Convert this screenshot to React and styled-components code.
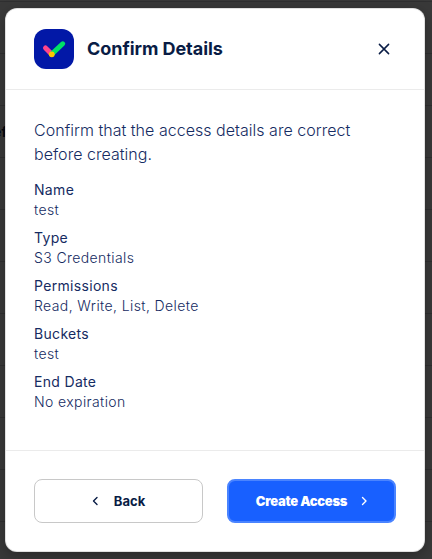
import React from "react";
import styled, { createGlobalStyle } from "styled-components";

const GlobalStyle = createGlobalStyle`
  * { box-sizing: border-box; }
  body {
    margin: 0;
    overflow: hidden;
    font-family: Inter, "Liberation Sans", sans-serif;
    color: #091c45;
  }
`;

const Backdrop = styled.div`
  position: relative;
  display: flex;
  width: 432px;
  height: 559px;
  padding: 8px 7px 7px 5px;
  background: repeating-linear-gradient(#2f2f30 0 1px, #393939 1px 52px) 0 1px;
`;

const CoveredText = styled.span`
  position: absolute;
  top: 123px;
  right: 425px;
  font-size: 14px;
  line-height: 18px;
  font-weight: 700;
  color: #02060f;
`;

const Dialog = styled.section`
  position: relative;
  display: flex;
  flex-direction: column;
  width: 420px;
  height: 544px;
  border: 1px solid rgba(0, 0, 0, 0.12);
  border-radius: 12px;
  background: #fff;
  box-shadow: 0 4px 14px rgba(0, 0, 0, 0.28);
`;

const Header = styled.header`
  display: flex;
  align-items: center;
  height: 81px;
  padding: 0 28px;
  border-bottom: 1px solid #ebebeb;
`;

const Title = styled.h1`
  flex: 1;
  margin: 0 0 0 13px;
  font-size: 18px;
  line-height: 24px;
  font-weight: 700;
  letter-spacing: -0.05px;
`;

const CloseButton = styled.button`
  display: flex;
  align-items: center;
  justify-content: center;
  width: 24px;
  height: 24px;
  padding: 0;
  border: 0;
  background: none;
  color: inherit;
`;

const Body = styled.div`
  flex: 1;
  padding: 28px;
  color: #152b62;
`;

const Intro = styled.p`
  margin: 0 0 14px;
  font-size: 16px;
  line-height: 24px;
  font-weight: 300;
  letter-spacing: 0.03px;
`;

const Details = styled.dl`
  display: flex;
  flex-direction: column;
  gap: 8px;
  margin: 0;
  font-size: 14px;
  line-height: 20px;
`;

const Label = styled.dt`
  font-weight: 400;
  letter-spacing: 0.32px;
`;

const Value = styled.dd`
  margin: 0;
  font-weight: 300;
  letter-spacing: 0.4px;
`;

const Footer = styled.footer`
  display: grid;
  grid-template-columns: 1fr 1fr;
  gap: 24px;
  height: 101px;
  padding: 28px 28px 0;
  border-top: 1px solid #ebebeb;
`;

const Button = styled.button`
  display: flex;
  align-items: center;
  justify-content: center;
  gap: ${(p) => (p.$primary ? "9px" : "11px")};
  height: 44px;
  padding: ${(p) => (p.$primary ? "0 0 0 5px" : "0 5px 0 0")};
  border-radius: 8px;
  border: ${(p) => (p.$primary ? "2px solid #4a84ff" : "1px solid #c8c8c8")};
  background: ${(p) => (p.$primary ? "#1860ff" : "#fff")};
  color: ${(p) => (p.$primary ? "#fff" : "#091c45")};
  font-family: inherit;
  font-size: 13px;
  line-height: 20px;
  font-weight: ${(p) => (p.$primary ? 900 : 700)};
  letter-spacing: ${(p) => (p.$primary ? "-0.27px" : "0")};
  white-space: nowrap;
`;

const details = [
  ["Name", "test"],
  ["Type", "S3 Credentials"],
  ["Permissions", "Read, Write, List, Delete"],
  ["Buckets", "test"],
  ["End Date", "No expiration"],
];

const CheckLogo = () => (
  <svg width="40" height="40" viewBox="0 0 40 40" fill="none">
    <rect width="40" height="40" rx="12" fill="#0218a7" />
    <g strokeWidth="5" strokeLinecap="round">
      <path d="M11.5 19L17.7 25.1" stroke="#ff458b" />
      <path d="M17.7 25.1L28.7 14.8" stroke="#00e366" />
    </g>
    <circle cx="17.8" cy="25.3" r="2.9" fill="#ffc600" />
  </svg>
);

const Chevron = ({ left }) => (
  <svg width="16" height="16" viewBox="0 0 16 16" fill="none">
    <path
      d={left ? "M10 4.5L6.5 8L10 11.5" : "M6.5 4.5L10 8L6.5 11.5"}
      stroke="currentColor"
      strokeWidth="1.4"
      strokeLinecap="round"
      strokeLinejoin="round"
    />
  </svg>
);

export default function App() {
  return (
    <>
      <GlobalStyle />
      <Backdrop>
        <CoveredText>ef</CoveredText>
        <Dialog>
          <Header>
            <CheckLogo />
            <Title>Confirm Details</Title>
            <CloseButton aria-label="Close">
              <svg width="12" height="12" viewBox="0 0 12 12">
                <path d="M1.4 1.4L10.6 10.6M10.6 1.4L1.4 10.6" stroke="currentColor" strokeWidth="1.5" strokeLinecap="round" />
              </svg>
            </CloseButton>
          </Header>
          <Body>
            <Intro>Confirm that the access details are correct before creating.</Intro>
            <Details>
              {details.map(([label, value]) => (
                <div key={label}>
                  <Label>{label}</Label>
                  <Value>{value}</Value>
                </div>
              ))}
            </Details>
          </Body>
          <Footer>
            <Button><Chevron left />Back</Button>
            <Button $primary>Create Access<Chevron /></Button>
          </Footer>
        </Dialog>
      </Backdrop>
    </>
  );
}
